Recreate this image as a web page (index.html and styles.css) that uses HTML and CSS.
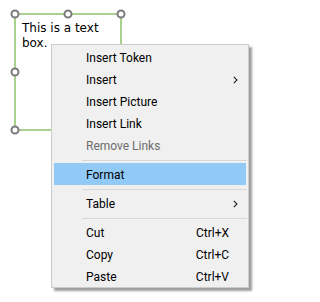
FILE: index.html
```html
<!DOCTYPE html>
<html>
<head>
<meta charset="utf-8">
<link rel="stylesheet" href="styles.css">
</head>
<body>
<div class="canvas">
  <div class="textbox">
    <div class="textbox-text">This is a text box.</div>
    <span class="handle h-tl"></span>
    <span class="handle h-tm"></span>
    <span class="handle h-tr"></span>
    <span class="handle h-ml"></span>
    <span class="handle h-bl"></span>
  </div>

  <div class="menu">
    <div class="item"><span class="label">Insert Token</span></div>
    <div class="item"><span class="label">Insert</span>
      <svg class="arrow" width="5" height="8" viewBox="0 0 5 8"><path d="M0.8 0.8 L4 4 L0.8 7.2" fill="none" stroke="#222" stroke-width="1.1"/></svg>
    </div>
    <div class="item"><span class="label">Insert Picture</span></div>
    <div class="item"><span class="label">Insert Link</span></div>
    <div class="item disabled"><span class="label">Remove Links</span></div>
    <div class="sep"></div>
    <div class="item selected"><span class="label">Format</span></div>
    <div class="sep"></div>
    <div class="item"><span class="label">Table</span>
      <svg class="arrow" width="5" height="8" viewBox="0 0 5 8"><path d="M0.8 0.8 L4 4 L0.8 7.2" fill="none" stroke="#222" stroke-width="1.1"/></svg>
    </div>
    <div class="sep"></div>
    <div class="item"><span class="label">Cut</span><span class="shortcut">Ctrl+X</span></div>
    <div class="item"><span class="label">Copy</span><span class="shortcut">Ctrl+C</span></div>
    <div class="item"><span class="label">Paste</span><span class="shortcut">Ctrl+V</span></div>
  </div>
</div>
</body>
</html>
```

FILE: styles.css
```css
html, body {
  margin: 0;
  padding: 0;
  background: #ffffff;
}

.canvas {
  position: relative;
  width: 257px;
  height: 302px;
  overflow: hidden;
}

.textbox {
  position: relative;
  box-sizing: border-box;
  margin: 13px 0 0 14px;
  width: 108px;
  height: 118px;
  border: 2px solid #a9d18e;
  padding: 6px 6px;
  font-family: "DejaVu Sans", sans-serif;
  font-size: 12px;
  line-height: 15px;
  color: #000;
}

.handle {
  position: absolute;
  width: 9px;
  height: 9px;
  box-sizing: border-box;
  border: 2px solid #7b7b7b;
  border-radius: 50%;
  background: #ffffff;
  transform: translate(-50%, -50%);
}

.h-tl { left: -1px; top: -1px; }
.h-tm { left: 50%; top: -1px; }
.h-tr { left: calc(100% + 1px); top: -1px; }
.h-ml { left: -1px; top: 50%; }
.h-bl { left: -1px; top: calc(100% + 1px); }

.menu {
  position: absolute;
  left: 51px;
  top: 44px;
  width: 198px;
  box-sizing: border-box;
  border: 1px solid #cccccc;
  background: #f0f0f0;
  padding: 1px 0 0 0;
  box-shadow: 3px 3px 2px rgba(0, 0, 0, 0.38);
  font-family: "Roboto", "Segoe UI", sans-serif;
  font-size: 12px;
  color: #000;
}

.item {
  display: flex;
  align-items: center;
  height: 22px;
  margin: 0 2px;
  padding: 1px 8px 0 32px;
  box-sizing: border-box;
}

.item .label {
  flex: 1;
}

.item.disabled {
  color: #6d6d6d;
}

.item.selected {
  background: #91c9f7;
}

.shortcut {
  margin-right: 9px;
}

.arrow {
  display: block;
  margin-right: 0;
}

.sep {
  height: 7px;
  margin: 0 1px 0 30px;
  box-sizing: border-box;
  padding-top: 4px;
}

.sep::before {
  content: "";
  display: block;
  height: 1px;
  background: #d7d7d7;
}
```
